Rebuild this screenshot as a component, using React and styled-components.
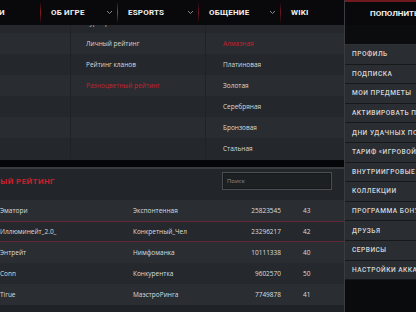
import React from "react";
import styled, { createGlobalStyle } from "styled-components";

const Global = createGlobalStyle`
  html, body {
    margin: 0;
    padding: 0;
    background: #0a0b0d;
    font-family: "Open Sans", "Roboto", sans-serif;
  }
  * { box-sizing: border-box; }
`;

const Page = styled.div`
  display: flex;
  width: 416px;
  height: 312px;
  overflow: hidden;
  background: #0a0b0d;
`;

const Main = styled.div`
  width: 344px;
  flex-shrink: 0;
  display: flex;
  flex-direction: column;
  overflow: hidden;
`;

const Nav = styled.nav`
  height: 25px;
  flex-shrink: 0;
  display: flex;
  align-items: stretch;
  background: #09090b;
  position: relative;
  z-index: 2;
`;

const NavItem = styled.div`
  width: ${p => p.$w}px;
  flex-shrink: 0;
  display: flex;
  align-items: center;
  justify-content: space-between;
  padding: 0 4px 0 10px;
  overflow: hidden;
  border-right: 1px solid transparent;
  border-image: linear-gradient(180deg, transparent 10%, ${p => p.$sep || "#6e1a22"} 50%, transparent 90%) 1;
`;

const NavText = styled.span`
  font-family: "Roboto", sans-serif;
  font-weight: 700;
  font-size: 8px;
  letter-spacing: 0.2px;
  color: #f1f1f1;
  white-space: nowrap;
  margin-left: ${p => p.$shift || 0}px;
`;

const Chevron = () => (
  <svg width="7" height="5" viewBox="0 0 7 5">
    <path d="M1 1 L3.5 3.5 L6 1" fill="none" stroke="#8a8c90" strokeWidth="1" />
  </svg>
);

const Dropdown = styled.div`
  height: 135px;
  flex-shrink: 0;
  overflow: hidden;
  background: #24282c;
`;

const DropInner = styled.div`
  margin-top: -13px;
`;

const DropRow = styled.div`
  display: grid;
  grid-template-columns: 70px 135px 1fr;
  height: 21px;
  background: ${p => (p.$alt ? "#292d31" : "#24282c")};
`;

const DropCell = styled.div`
  display: flex;
  align-items: center;
  padding-left: ${p => p.$pad || 15}px;
  font-size: 6.5px;
  color: ${p => (p.$red ? "#c8202e" : "#d8d9da")};
  white-space: nowrap;
  border-left: 1px solid ${p => (p.$first ? "transparent" : "#202326")};
`;

const Band = styled.div`
  height: 9px;
  flex-shrink: 0;
  background: #050607;
  border-bottom: 2px solid #393c3f;
`;

const Section = styled.div`
  flex: 1;
  display: flex;
  flex-direction: column;
  background: #1f2226;
`;

const SectionHead = styled.div`
  height: 31px;
  flex-shrink: 0;
  display: flex;
  align-items: center;
  justify-content: space-between;
  padding-right: 12px;
  background: #22262a;
`;

const Title = styled.h2`
  margin: -6px 0 0 -56px;
  font-family: "Roboto", sans-serif;
  font-weight: 700;
  font-size: 8px;
  letter-spacing: 0.4px;
  color: #cc1f2c;
  white-space: nowrap;
`;

const Search = styled.input`
  width: 110px;
  height: 18px;
  margin-top: -7px;
  background: #1d2023;
  border: 1px solid #4a4d51;
  box-shadow: inset 0 0 0 1px #16181a;
  padding: 0 4px;
  font-family: "Open Sans", sans-serif;
  font-size: 6px;
  color: #ccc;
  outline: none;
  &::placeholder { color: #8e9094; }
`;

const Row = styled.div`
  display: grid;
  grid-template-columns: 133px 100px 48px 1fr;
  height: 21px;
  align-items: center;
  background: ${p => (p.$alt ? "#25292d" : "#2a2e32")};
  border-top: 1px solid ${p => (p.$hl ? "#66263a" : "transparent")};
  border-bottom: 1px solid ${p => (p.$hl ? "#66263a" : "transparent")};
  font-size: 6.5px;
  color: #dcdddf;
  white-space: nowrap;
`;

const Cell = styled.span`
  padding-left: ${p => p.$pad || 0}px;
  text-align: ${p => p.$align || "left"};
  overflow: hidden;
`;

const Side = styled.aside`
  flex: 1;
  display: flex;
  flex-direction: column;
  border-left: 1px solid #3a3d40;
  background: #0a0b0d;
  overflow: hidden;
`;

const TopUp = styled.div`
  height: 25px;
  flex-shrink: 0;
  display: flex;
  align-items: center;
  padding-left: 25px;
  border-top: 2px solid #6f1820;
  background: #09090b;
  font-family: "Roboto", sans-serif;
  font-weight: 700;
  font-size: 8px;
  color: #f2f2f2;
  white-space: nowrap;
`;

const SideGap = styled.div`
  height: 20px;
  flex-shrink: 0;
  background: #0b0c0e;
  border-bottom: 1px solid #2e3135;
`;

const MenuItem = styled.div`
  height: 19.6px;
  flex-shrink: 0;
  display: flex;
  align-items: center;
  padding-left: 7px;
  background: #2a2d31;
  border-bottom: 1px solid #16181a;
  font-family: "Roboto", sans-serif;
  font-weight: 500;
  font-size: 6.6px;
  letter-spacing: 0.5px;
  color: #d6d7d8;
  white-space: nowrap;
`;

const nav = [
  { text: "НОВОСТИ", w: 41, shift: -44, sep: "#8a1c25" },
  { text: "ОБ ИГРЕ", w: 77, chev: true, sep: "#5a5d60" },
  { text: "ESPORTS", w: 81, chev: true },
  { text: "ОБЩЕНИЕ", w: 82, chev: true },
  { text: "WIKI", w: 63, sep: "transparent" },
];

const drop = [
  ["Турниры", "Все лиги"],
  ["Личный рейтинг", "Алмазная", false, true],
  ["Рейтинг кланов", "Платиновая"],
  ["Разноцветный рейтинг", "Золотая", true],
  ["", "Серебряная"],
  ["", "Бронзовая"],
  ["", "Стальная"],
];

const players = [
  ["Эматори", "Экспонтенная", "25823545", "43"],
  ["Иллюминейт_2.0_", "Конкретный_Чел", "23296217", "42"],
  ["Энтрейт", "Нимфоманка", "10111338", "40"],
  ["Conn", "Конкурентка", "9602570", "50"],
  ["Tirue", "МаэстроРинга", "7749878", "41"],
];

const menu = [
  "ПРОФИЛЬ",
  "ПОДПИСКА",
  "МОИ ПРЕДМЕТЫ",
  "АКТИВИРОВАТЬ ПРОМОКОД",
  "ДНИ УДАЧНЫХ ПОКУПОК",
  "ТАРИФ «ИГРОВОЙ»",
  "ВНУТРИИГРОВЫЕ ПОКУПКИ",
  "КОЛЛЕКЦИИ",
  "ПРОГРАММА БОНУСОВ",
  "ДРУЗЬЯ",
  "СЕРВИСЫ",
  "НАСТРОЙКИ АККАУНТА",
];

export default function App() {
  return (
    <>
      <Global />
      <Page>
        <Main>
          <Nav>
            {nav.map(n => (
              <NavItem key={n.text} $w={n.w} $sep={n.sep}>
                <NavText $shift={n.shift}>{n.text}</NavText>
                {n.chev && <Chevron />}
              </NavItem>
            ))}
          </Nav>
          <Dropdown>
            <DropInner>
              {drop.map(([a, b, redA, redB], i) => (
                <DropRow key={i} $alt={i % 2 === 1}>
                  <DropCell $first />
                  <DropCell $red={redA}>{a}</DropCell>
                  <DropCell $pad={17} $red={redB}>{b}</DropCell>
                </DropRow>
              ))}
            </DropInner>
          </Dropdown>
          <Band />
          <Section>
            <SectionHead>
              <Title>РАЗНОЦВЕТНЫЙ РЕЙТИНГ</Title>
              <Search placeholder="Поиск" />
            </SectionHead>
            {players.map((p, i) => (
              <Row key={p[0]} $alt={i % 2 === 1} $hl={i === 1}>
                <Cell>{p[0]}</Cell>
                <Cell>{p[1]}</Cell>
                <Cell $align="right">{p[2]}</Cell>
                <Cell $pad={22}>{p[3]}</Cell>
              </Row>
            ))}
          </Section>
        </Main>
        <Side>
          <TopUp>ПОПОЛНИТЬ СЧЁТ</TopUp>
          <SideGap />
          {menu.map(m => (
            <MenuItem key={m}>{m}</MenuItem>
          ))}
        </Side>
      </Page>
    </>
  );
}
